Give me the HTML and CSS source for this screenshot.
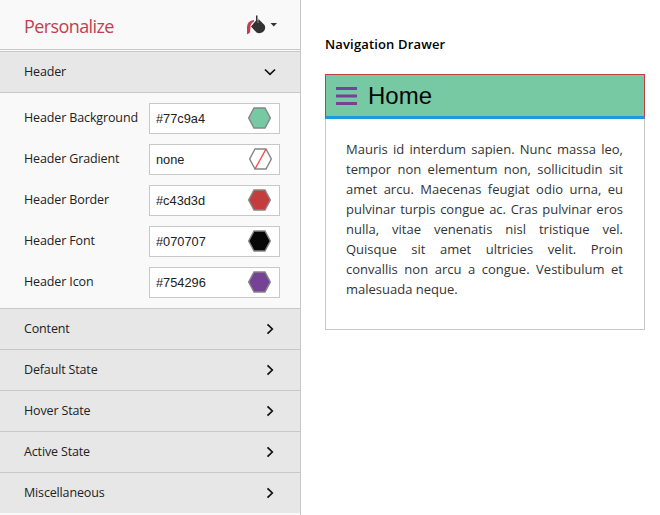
FILE: index.html
```html
<!DOCTYPE html>
<html lang="en">
<head>
<meta charset="utf-8">
<title>Personalize</title>
<link rel="stylesheet" href="styles.css">
</head>
<body>
<div class="app">
  <aside class="sidebar">
    <div class="topbar">
      <h1 class="title">Personalize</h1>
      <svg class="bucket" width="30" height="20" viewBox="0 0 30 20"><path d="M0 19.500V12Q0 6 7 5V6.500Q3 9 3.500 12L3 17.500Z" fill="#c43d50"/><path d="M4 11.500L9 5.500V0.500H10.500V5L12 4.500L17.500 10Q19.500 14 16 17Q13 19 9.500 17.500Z" fill="#333"/><path d="M11 3V8" stroke="#aaa" stroke-width="0.800"/><path d="M23.500 8H30L26.750 11.500Z" fill="#333"/></svg>
    </div>
    <div class="section open"><span>Header</span><svg class="chev" width="12" height="12" viewBox="0 0 12 12"><path d="M1 3.500L6 8.300L11 3.500"/></svg></div>
    <div class="fields">
      <div class="row"><label>Header Background</label><div class="field"><span>#77c9a4</span><svg class="hex" width="23" height="22" viewBox="0 0 23 22"><path fill="#77c9a4" d="M6 1H17L22.300 11L17 21H6L0.700 11Z"/></svg></div></div>
      <div class="row"><label>Header Gradient</label><div class="field"><span>none</span><svg class="hex none" width="23" height="22" viewBox="0 0 23 22"><path fill="#fff" d="M6 1H17L22.300 11L17 21H6L0.700 11Z"/><path class="slash" d="M17 1L6 21"/></svg></div></div>
      <div class="row"><label>Header Border</label><div class="field"><span>#c43d3d</span><svg class="hex" width="23" height="22" viewBox="0 0 23 22"><path fill="#c43d3d" d="M6 1H17L22.300 11L17 21H6L0.700 11Z"/></svg></div></div>
      <div class="row"><label>Header Font</label><div class="field"><span>#070707</span><svg class="hex" width="23" height="22" viewBox="0 0 23 22"><path fill="#070707" d="M6 1H17L22.300 11L17 21H6L0.700 11Z"/></svg></div></div>
      <div class="row"><label>Header Icon</label><div class="field"><span>#754296</span><svg class="hex" width="23" height="22" viewBox="0 0 23 22"><path fill="#754296" d="M6 1H17L22.300 11L17 21H6L0.700 11Z"/></svg></div></div>
    </div>
    <div class="section"><span>Content</span><svg class="chev" width="12" height="12" viewBox="0 0 12 12"><path d="M3.500 1.300L8.300 6L3.500 10.700"/></svg></div>
    <div class="section"><span>Default State</span><svg class="chev" width="12" height="12" viewBox="0 0 12 12"><path d="M3.500 1.300L8.300 6L3.500 10.700"/></svg></div>
    <div class="section"><span>Hover State</span><svg class="chev" width="12" height="12" viewBox="0 0 12 12"><path d="M3.500 1.300L8.300 6L3.500 10.700"/></svg></div>
    <div class="section"><span>Active State</span><svg class="chev" width="12" height="12" viewBox="0 0 12 12"><path d="M3.500 1.300L8.300 6L3.500 10.700"/></svg></div>
    <div class="section"><span>Miscellaneous</span><svg class="chev" width="12" height="12" viewBox="0 0 12 12"><path d="M3.500 1.300L8.300 6L3.500 10.700"/></svg></div>
  </aside>
  <main class="preview">
    <h2 class="caption">Navigation Drawer</h2>
    <div class="drawer">
      <div class="bar"><svg class="menu" width="21" height="18" viewBox="0 0 21 18"><path d="M0 1.500H21M0 9H21M0 16.500H21" stroke="#754296" stroke-width="3"/></svg><span>Home</span></div>
      <p class="text">Mauris id interdum sapien. Nunc massa leo,<br>tempor non elementum non, sollicitudin sit<br>amet arcu. Maecenas feugiat odio urna, eu<br>pulvinar turpis congue ac. Cras pulvinar eros<br>nulla, vitae venenatis nisl tristique vel.<br>Quisque sit amet ultricies velit. Proin<br>convallis non arcu a congue. Vestibulum et<br><span class="last">malesuada neque.</span></p>
    </div>
  </main>
</div>
</body>
</html>
```
FILE: styles.css
```css
* { box-sizing: border-box; }
body { margin: 0; background: #fff; font: 13px "Open Sans", "Noto Sans", sans-serif; color: #222; overflow: hidden; }
.app { display: flex; height: 515px; }
.sidebar { width: 301px; height: 515px; background: #f9f9f9; border-right: 1px solid #c8c8c8; flex: none; }
.topbar { height: 50px; border-bottom: 1px solid #c8c8c8; display: flex; justify-content: space-between; padding: 2px 23px 0 24px; align-items: center; }
.title { margin: 0; font-size: 18px; font-weight: 400; color: #c43d50; letter-spacing: -0.6px; }
.bucket { display: block; margin-top: -2px; }
.section { height: 41px; background: #e7e7e7; border-top: 1px solid #c8c8c8; display: flex; align-items: center; justify-content: space-between; padding: 0 24px; font-size: 12.5px; letter-spacing: -0.15px; }
.section.open { height: 42px; margin-top: 1px; border-bottom: 1px solid #c8c8c8; }
.section span { position: relative; top: -1px; }
.chev { fill: none; stroke: #111; stroke-width: 1.7; }
.fields { height: 215px; padding: 10px 20px 0 24px; display: flex; flex-direction: column; gap: 10px; }
.row { height: 31px; display: flex; justify-content: space-between; }
.row label { font-size: 12.5px; line-height: 29px; letter-spacing: -0.13px; }
.field { width: 131px; height: 31px; border: 1px solid #c8c8c8; background: #fff; display: flex; align-items: center; justify-content: space-between; padding: 0 8px 1px 6px; font: 12.8px "Liberation Sans", sans-serif; }
.hex { stroke: #858585; stroke-width: 1.4; }
.hex.none { margin-right: -1px; }
.slash { stroke: #f44; }
.preview { padding: 35px 0 0 24px; width: 344px; }
.caption { margin: 0; height: 39px; font-size: 13px; line-height: 18px; font-weight: 600; color: #000; letter-spacing: 0.15px; }
.drawer { width: 320px; height: 256px; border: 1px solid #c8c8c8; }
.bar { margin: -1px -1px 0; height: 45px; background: #77c9a4; border: 1px solid #c43d3d; border-bottom: 3px solid #1a9bdc; display: flex; align-items: center; gap: 11px; padding-left: 10px; font: 24px "Liberation Sans", sans-serif; color: #070707; }
.menu { margin-top: 1px; }
.text { margin: 20px 21px 0 20px; line-height: 20px; color: #333; text-align: justify; text-align-last: justify; font-size: 13px; white-space: normal; }
.last { display: block; text-align-last: left; }
```
